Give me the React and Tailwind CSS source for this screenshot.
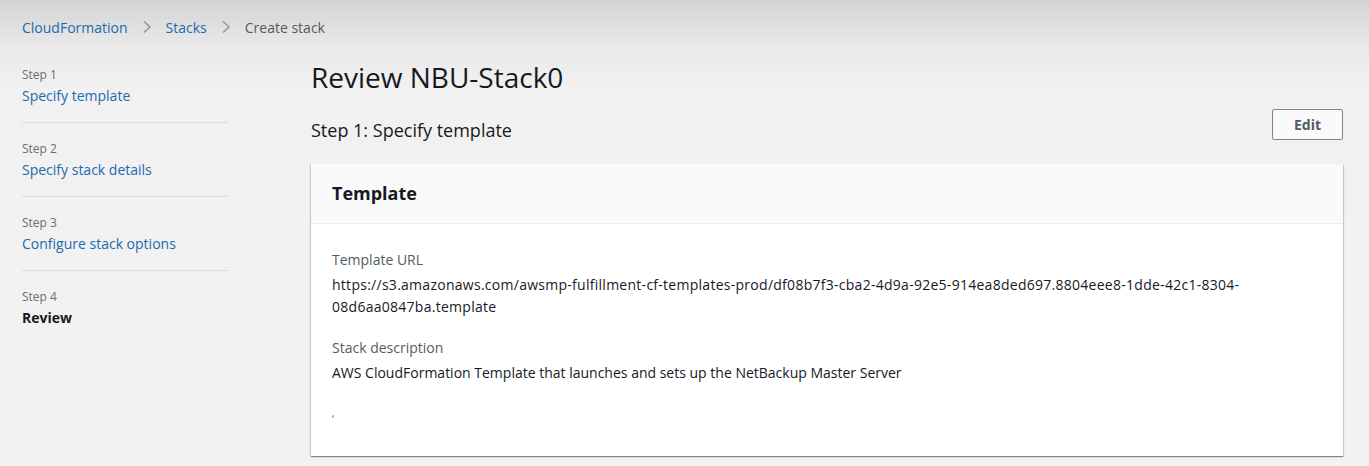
import React from 'react'

const STEPS = [
  { n: 1, label: 'Specify template' },
  { n: 2, label: 'Specify stack details' },
  { n: 3, label: 'Configure stack options' },
  { n: 4, label: 'Review', current: true },
]

export default function App() {
  return (
    <div className="min-h-[466px] w-full bg-[linear-gradient(to_bottom,#d3d3d3_0px,#e9e9e9_45px,#f1f1f1_90px,#f2f2f2_100%)] text-[#16191f] font-['Open_Sans','Liberation_Sans',sans-serif] text-[14px]">
      {/* Breadcrumbs */}
      <nav className="flex items-center h-[54px] pl-[22px] text-[14px]">
        <a className="text-[#1a6bae]">CloudFormation</a>
        <span className="mx-[14px] text-[#8b9298]">
          <svg width="10" height="14" viewBox="0 0 10 14" fill="none" stroke="currentColor" strokeWidth="1.4"><path d="M2 1.5l6 5.5-6 5.5" /></svg>
        </span>
        <a className="text-[#1a6bae]">Stacks</a>
        <span className="mx-[14px] text-[#8b9298]">
          <svg width="10" height="14" viewBox="0 0 10 14" fill="none" stroke="currentColor" strokeWidth="1.4"><path d="M2 1.5l6 5.5-6 5.5" /></svg>
        </span>
        <span className="text-[#545b64]">Create stack</span>
      </nav>

      <div className="flex">
        {/* Wizard steps */}
        <aside className="w-[206px] ml-[22px] shrink-0 pt-[13px]">
          {STEPS.map((s, i) => (
            <div key={s.n} className={i < STEPS.length - 1 ? 'border-b border-[#dcdcdc] pb-[15px] mb-[18px]' : ''}>
              <div className="text-[12px] text-[#687078] leading-[16px]">Step {s.n}</div>
              <div className={`leading-[22px] mt-[2px] ${s.current ? 'font-bold text-[#16191f]' : 'text-[#1a6bae]'}`}>{s.label}</div>
            </div>
          ))}
        </aside>

        {/* Main */}
        <main className="flex-1 ml-[83px] mr-[26px]">
          <h1 className="text-[28px] leading-[34px] text-[#16191f] mt-[6px]">Review NBU-Stack0</h1>

          <div className="flex items-end justify-between mt-[15px] mb-[22px]">
            <h2 className="text-[18px] leading-[24px] text-[#16191f]">Step 1: Specify template</h2>
            <button className="h-[31px] w-[71px] mb-[2px] border border-[#7d8590] rounded-[2px] bg-[#fafafa] text-[#545b64] font-bold text-[14px]">Edit</button>
          </div>

          <section className="bg-white shadow-[0_1px_1px_0_rgba(0,28,36,0.3),1px_1px_1px_0_rgba(0,28,36,0.15),-1px_1px_1px_0_rgba(0,28,36,0.15)]">
            <header className="h-[60px] bg-[#fafafa] border-b border-[#eaeded] flex items-center px-[21px]">
              <h3 className="text-[18px] font-bold">Template</h3>
            </header>
            <div className="px-[21px] pt-[25px] pb-[26px]">
              <div className="text-[#545b64] leading-[22px]">Template URL</div>
              <div className="leading-[22px] mt-[3px] pr-[60px] tracking-[0.27px]">
                https://s3.amazonaws.com/awsmp-fulfillment-cf-templates-prod/df08b7f3-cba2-4d9a-92e5-914ea8ded697.8804eee8-1dde-42c1-8304-<br />08d6aa0847ba.template
              </div>
              <div className="text-[#545b64] leading-[22px] mt-[19px]">Stack description</div>
              <div className="leading-[22px] mt-[3px]">AWS CloudFormation Template that launches and sets up the NetBackup Master Server</div>
              <div className="leading-[22px] mt-[24px] text-[#545b64] text-[10px]">‘</div>
            </div>
          </section>
        </main>
      </div>
    </div>
  )
}
